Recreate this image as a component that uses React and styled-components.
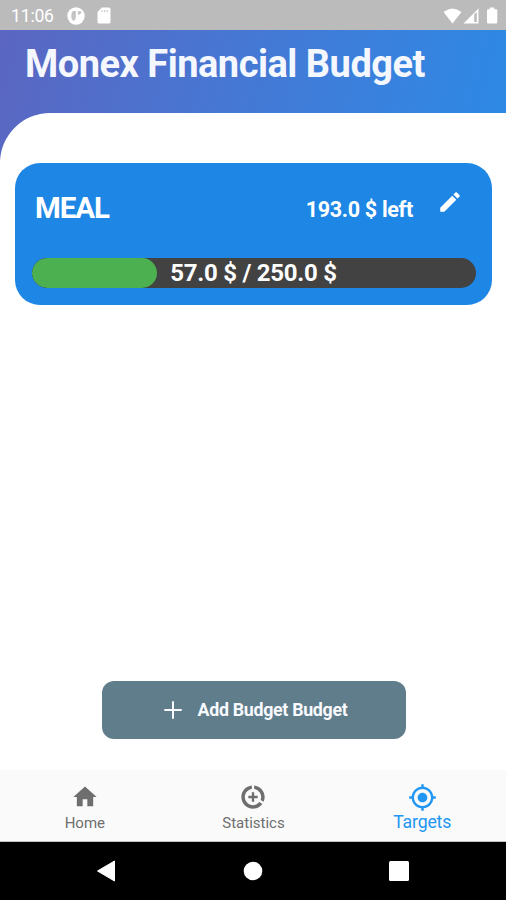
import React from "react";
import styled, { createGlobalStyle } from "styled-components";

const Global = createGlobalStyle`
  * { box-sizing: border-box; }
  body { margin: 0; background: #fff; font-family: Roboto, "Liberation Sans", sans-serif; }
  svg { display: block; flex: none; }
`;

const Screen = styled.div`
  width: 506px;
  height: 900px;
  display: flex;
  flex-direction: column;
  overflow: hidden;
  background: #fff;
`;

const StatusBar = styled.header`
  height: 30px;
  flex: none;
  display: flex;
  align-items: center;
  padding: 1px 8px 0 11px;
  background: #bbb;
  color: #fff;
`;

const Clock = styled.span`
  width: 56px;
  font-size: 17.6px;
  line-height: 28px;
  letter-spacing: -0.2px;
`;

const StatusGroup = styled.div`
  display: flex;
  align-items: center;
  gap: ${(p) => p.$gap}px;
  margin-left: ${(p) => (p.$end ? "auto" : "0")};
`;

const Backdrop = styled.div`
  height: 130px;
  flex: none;
  background: linear-gradient(105deg, #5b66c1 0%, #4a74d0 36%, #3c7fdb 66%, #2c8ae6 100%);
`;

const Title = styled.h1`
  margin: 0;
  height: 83px;
  padding: 12px 0 0 25px;
  color: #f5f7ff;
  font-size: 38px;
  line-height: 45px;
  font-weight: 700;
  letter-spacing: -0.5px;
  white-space: nowrap;
`;

const Sheet = styled.main`
  height: 657px;
  flex: none;
  margin-top: -47px;
  padding: 50px 14px 0 15px;
  display: flex;
  flex-direction: column;
  align-items: center;
  background: #fff;
  border-top-left-radius: 50px;
`;

const Card = styled.section`
  width: 100%;
  height: 142px;
  padding: 25px 16px 0 17px;
  border-radius: 25px;
  background: #1e87e5;
  color: #fff;
`;

const CardHead = styled.div`
  height: 70px;
  display: flex;
  align-items: flex-start;
  padding: 0 13px 0 3px;

  svg {
    margin-top: 1px;
  }
`;

const Category = styled.h2`
  margin: 0 auto 0 0;
  font-size: 29.5px;
  line-height: 41px;
  font-weight: 700;
  letter-spacing: -1.1px;
`;

const Remaining = styled.span`
  padding-top: 1px;
  margin-right: 24px;
  font-size: 21.5px;
  line-height: 42px;
  font-weight: 700;
  letter-spacing: -0.3px;
`;

const Track = styled.div`
  height: 30px;
  display: grid;
  border-radius: 16px;
  overflow: hidden;
  background: #424242;
`;

const Fill = styled.div`
  grid-area: 1 / 1;
  width: 125px;
  border-radius: 16px;
  background: #4caf50;
`;

const TrackLabel = styled.span`
  grid-area: 1 / 1;
  text-align: center;
  padding-right: 1px;
  font-size: 24px;
  line-height: 30px;
  font-weight: 700;
  letter-spacing: -0.25px;
`;

const AddButton = styled.button`
  width: 304px;
  height: 58px;
  margin: auto 0 31px;
  border: 0;
  border-radius: 12px;
  display: flex;
  align-items: center;
  justify-content: center;
  gap: 10px;
  padding: 0 2px 0 0;
  background: #607d8b;
  color: #f8faff;
  font: 700 17.8px/24px Roboto, "Liberation Sans", sans-serif;
  letter-spacing: -0.3px;
`;

const Tabs = styled.nav`
  height: 72px;
  flex: none;
  display: grid;
  grid-template-columns: repeat(3, 1fr);
  background: #fafafa;
  border-bottom: 1px solid #c4c4c4;
`;

const Tab = styled.div`
  display: flex;
  flex-direction: column;
  align-items: center;
  padding: 13px 0 0 1px;
  color: ${(p) => (p.$active ? "#2196f3" : "#6e6e6e")};
`;

const TabLabel = styled.span`
  margin-top: ${(p) => (p.$active ? -1 : 1)}px;
  font-size: ${(p) => (p.$active ? 17.7 : 15)}px;
  line-height: 22px;
  letter-spacing: ${(p) => (p.$active ? -0.2 : 0)}px;
`;

const SystemBar = styled.footer`
  flex: 1;
  display: flex;
  align-items: center;
  justify-content: center;
  gap: 126px;
  background: #000;
`;

const Icon = ({ size = 28, d }) => (
  <svg width={size} height={size} viewBox="0 0 24 24" fill="currentColor">
    <path d={d} />
  </svg>
);

const TABS = [
  { label: "Home", d: "M10 20v-6h4v6h5v-8h3L12 3 2 12h3v8z" },
  {
    label: "Statistics",
    d: "M11 8v3H8v2h3v3h2v-3h3v-2h-3V8h-2zm2-5.95v3.03c3.39.49 6 3.39 6 6.92 0 .9-.18 1.75-.48 2.54l2.6 1.53c.56-1.24.88-2.62.88-4.07 0-5.18-3.95-9.45-9-9.95zM12 19c-3.87 0-7-3.13-7-7 0-3.53 2.61-6.43 6-6.92V2.05c-5.06.5-9 4.76-9 9.95 0 5.52 4.47 10 9.99 10 3.31 0 6.24-1.61 8.06-4.09l-2.6-1.53C16.17 17.98 14.21 19 12 19z",
  },
  {
    label: "Targets",
    active: true,
    d: "M12 8c-2.21 0-4 1.79-4 4s1.79 4 4 4 4-1.79 4-4-1.79-4-4-4zm8.94 3c-.46-4.17-3.77-7.48-7.94-7.94V1h-2v2.06C6.83 3.52 3.52 6.83 3.06 11H1v2h2.06c.46 4.17 3.77 7.48 7.94 7.94V23h2v-2.06c4.17-.46 7.48-3.77 7.94-7.94H23v-2h-2.06zM12 19c-3.87 0-7-3.13-7-7s3.13-7 7-7 7 3.13 7 7-3.13 7-7 7z",
  },
];

export default function App() {
  return (
    <>
      <Global />
      <Screen>
        <StatusBar>
          <Clock>11:06</Clock>
          <StatusGroup $gap={12}>
            <svg width="18" height="18" viewBox="0 0 18 18">
              <circle cx="9" cy="9" r="8.7" fill="#fff" />
              <path d="M8.8 4H6Q4.2 5.5 4.2 9Q4.2 12 6 13.8Q8.8 13.3 8.8 10.5Z" fill="#c4c4c4" />
              <path d="M10.8 4.2H14.4Q14.6 7.6 10.8 7.6Z" fill="#c4c4c4" />
            </svg>
            <svg width="14" height="17" viewBox="0 0 14 17">
              <path d="M5 .5H12Q13.5.5 13.5 2V15Q13.5 16.5 12 16.5H2Q.5 16.5.5 15V5Z" fill="#fff" />
              <path d="M5 3V5M7.5 3V5M10 3V5" stroke="#ccc" strokeWidth="1.2" />
            </svg>
          </StatusGroup>
          <StatusGroup $end $gap={1}>
            <svg width="19" height="16" viewBox="0 0 19 16">
              <path d="M.5 4Q9.5-3 18.5 4L9.5 15.5Z" fill="#fff" />
            </svg>
            <svg width="16" height="16" viewBox="0 0 16 16">
              <path d="M15.5.5V15.5H.5Z" fill="#fff" />
              <path d="M11.2 6.5L13.8 4V14H11.2Z" fill="#bbb" />
            </svg>
            <svg width="18" height="17" viewBox="0 0 18 17">
              <path d="M9.8 2.2V.5H14.3V2.2H16Q17.3 2.2 17.3 3.5V15Q17.3 16.5 16 16.5H8.2Q7 16.5 7 15V3.5Q7 2.2 8.2 2.2Z" fill="#fff" />
            </svg>
          </StatusGroup>
        </StatusBar>
        <Backdrop>
          <Title>Monex Financial Budget</Title>
        </Backdrop>
        <Sheet>
          <Card>
            <CardHead>
              <Category>MEAL</Category>
              <Remaining>193.0 $ left</Remaining>
              <Icon
                size={26}
                d="M3 17.25V21h3.75L17.81 9.94l-3.75-3.75L3 17.25zM20.71 7.04c.39-.39.39-1.02 0-1.41l-2.34-2.34a.996.996 0 0 0-1.41 0l-1.83 1.83 3.75 3.75 1.83-1.83z"
              />
            </CardHead>
            <Track>
              <Fill />
              <TrackLabel>57.0 $ / 250.0 $</TrackLabel>
            </Track>
          </Card>
          <AddButton>
            <Icon size={30} d="M19 12.8h-6.2V19h-1.6v-6.2H5v-1.6h6.2V5h1.6v6.2H19z" />
            Add Budget Budget
          </AddButton>
        </Sheet>
        <Tabs>
          {TABS.map((t) => (
            <Tab key={t.label} $active={t.active}>
              <Icon size={t.active ? 29 : 28} d={t.d} />
              <TabLabel $active={t.active}>{t.label}</TabLabel>
            </Tab>
          ))}
        </Tabs>
        <SystemBar>
          <svg width="20" height="22" viewBox="0 0 20 22">
            <path d="M17.5 1V21L.5 11Z" fill="#fff" stroke="#fff" strokeLinejoin="round" />
          </svg>
          <svg width="20" height="20" viewBox="0 0 20 20">
            <circle cx="10" cy="10" r="9.3" fill="#fff" />
          </svg>
          <svg width="20" height="20" viewBox="0 0 20 20">
            <rect width="20" height="20" rx="1.5" fill="#fff" />
          </svg>
        </SystemBar>
      </Screen>
    </>
  );
}
